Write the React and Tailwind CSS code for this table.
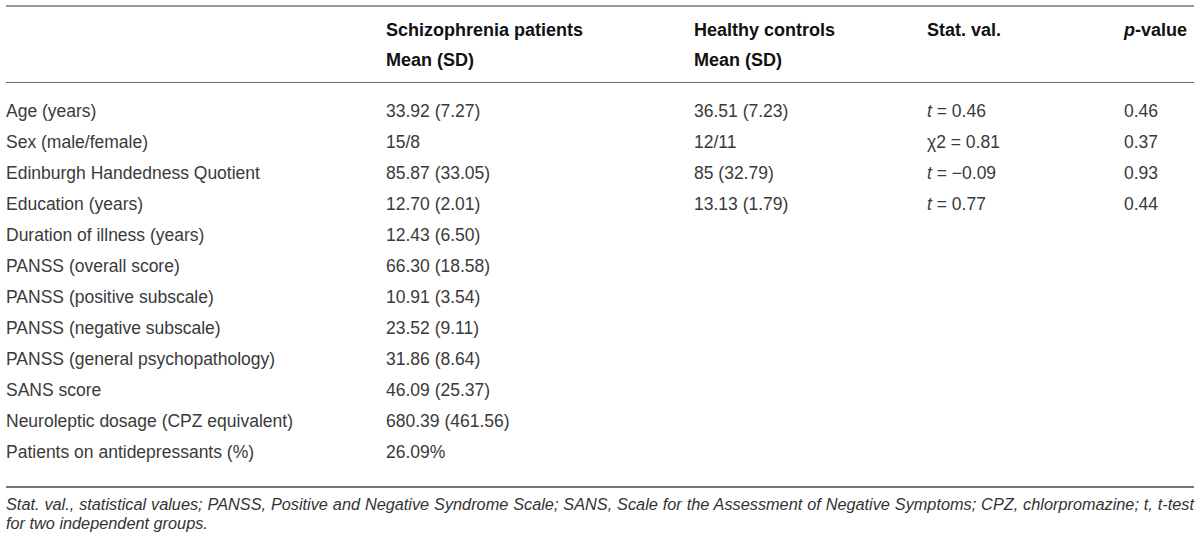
import React from "react";

const rows = [
  ["Age (years)", "33.92 (7.27)", "36.51 (7.23)", <><i>t</i> = 0.46</>, "0.46"],
  ["Sex (male/female)", "15/8", "12/11", <>χ2 = 0.81</>, "0.37"],
  ["Edinburgh Handedness Quotient", "85.87 (33.05)", "85 (32.79)", <><i>t</i> = −0.09</>, "0.93"],
  ["Education (years)", "12.70 (2.01)", "13.13 (1.79)", <><i>t</i> = 0.77</>, "0.44"],
  ["Duration of illness (years)", "12.43 (6.50)", "", "", ""],
  ["PANSS (overall score)", "66.30 (18.58)", "", "", ""],
  ["PANSS (positive subscale)", "10.91 (3.54)", "", "", ""],
  ["PANSS (negative subscale)", "23.52 (9.11)", "", "", ""],
  ["PANSS (general psychopathology)", "31.86 (8.64)", "", "", ""],
  ["SANS score", "46.09 (25.37)", "", "", ""],
  ["Neuroleptic dosage (CPZ equivalent)", "680.39 (461.56)", "", "", ""],
  ["Patients on antidepressants (%)", "26.09%", "", "", ""],
];

const cols = "grid grid-cols-[380px_308px_233px_197px_1fr]";

export default function App() {
  return (
    <div
      className="w-[1200px] h-[542px] bg-white px-[6px] pt-[5px] text-[#3a3a3a]"
      style={{ fontFamily: '"Liberation Sans", Arial, sans-serif' }}
    >
      <div className="border-t-2 border-[#999]">
        <div className={`${cols} pt-[8px] pb-[7px] border-b border-[#666] text-[18px] leading-[30px] font-bold text-[#111]`}>
          <div></div>
          <div>
            <div>Schizophrenia patients</div>
            <div>Mean (SD)</div>
          </div>
          <div>
            <div>Healthy controls</div>
            <div>Mean (SD)</div>
          </div>
          <div>Stat. val.</div>
          <div>
            <i>p</i>-value
          </div>
        </div>
        <div className="pt-[13px] pb-[18px] border-b-2 border-[#777] text-[17.5px] leading-[31px]">
          {rows.map((r, i) => (
            <div key={i} className={cols}>
              {r.map((c, j) => (
                <div key={j} className="whitespace-nowrap">{c}</div>
              ))}
            </div>
          ))}
        </div>
        <div className="pt-[7px] text-[16.3px] leading-[19px] italic text-justify text-[#333]">
          Stat. val., statistical values; PANSS, Positive and Negative Syndrome Scale; SANS, Scale for the Assessment of Negative Symptoms; CPZ, chlorpromazine; t, <span className="whitespace-nowrap">t-test</span> for two independent groups.
        </div>
      </div>
    </div>
  );
}
